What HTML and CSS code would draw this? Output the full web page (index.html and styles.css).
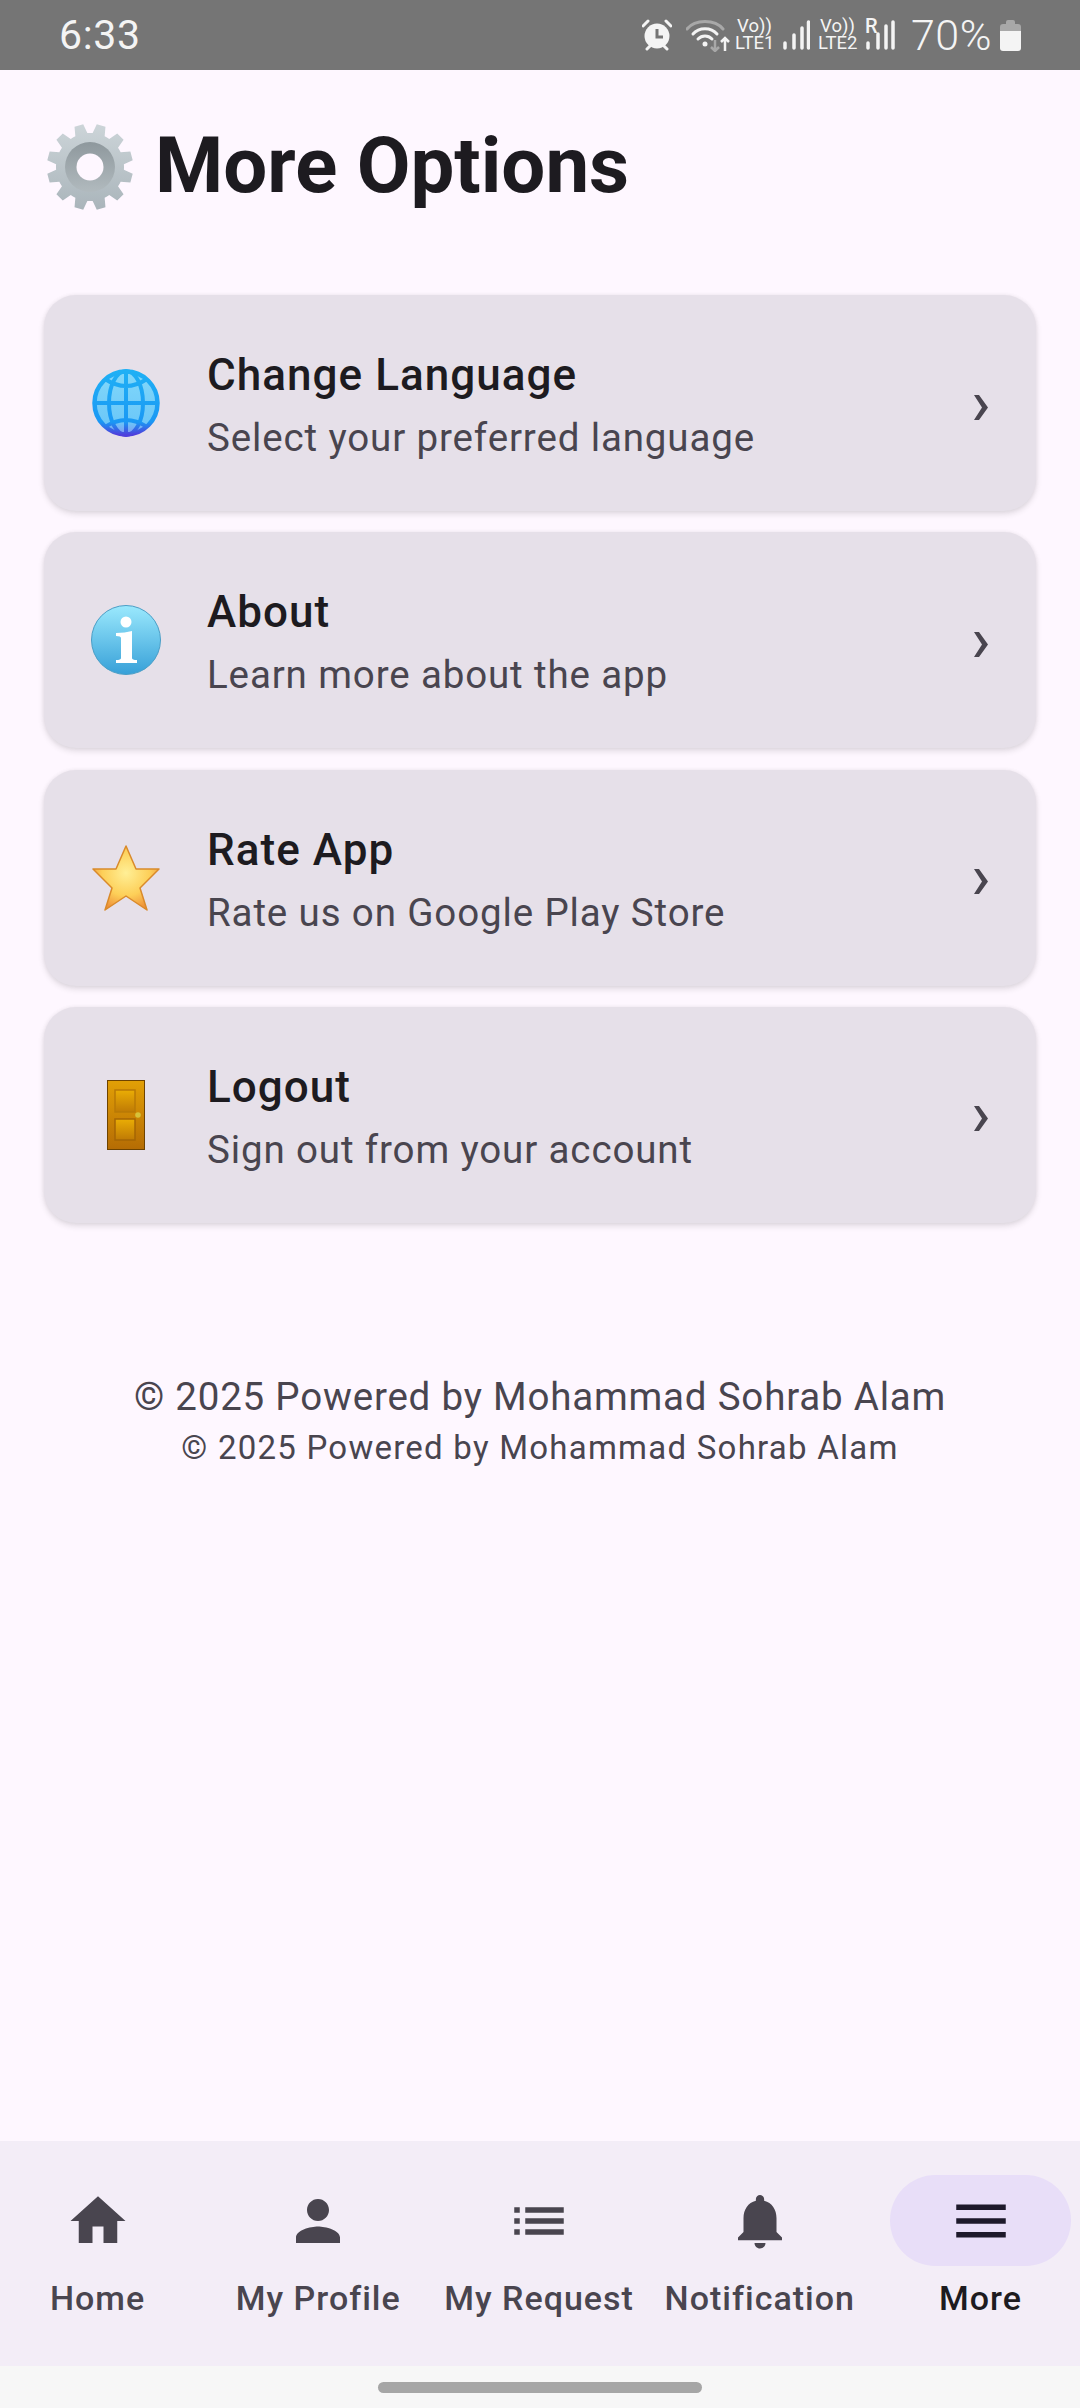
FILE: index.html
```html
<!DOCTYPE html>
<html lang="en">
<head>
    <meta charset="UTF-8">
    <meta name="viewport" content="width=device-width, initial-scale=1.0">
    <title>More Options</title>
    <link rel="stylesheet" href="styles.css">
</head>
<body>

    <!-- Status bar -->
    <div class="status-bar">
        <span class="clock">6:33</span>
        <div class="status-icons">
            <svg class="st-alarm" width="30" height="32" viewBox="0 0 30 32">
                <circle cx="15" cy="17" r="12.5" fill="#f4f4f4"/>
                <path d="M5 30l3-3M25 30l-3-3M1 7l5-5M29 7l-5-5" stroke="#f4f4f4" stroke-width="3" stroke-linecap="round"/>
                <path d="M15 10v8h6" fill="none" stroke="#757575" stroke-width="3"/>
            </svg>
            <svg class="st-wifi" width="44" height="34" viewBox="0 0 44 34">
                <path d="M1 11C9 1 29 1 37 11" fill="none" stroke="#a8a8a8" stroke-width="3" stroke-linecap="round"/>
                <path d="M7 16C13 9 25 9 31 16M12 21c4-4 10-4 14 0" fill="none" stroke="#f4f4f4" stroke-width="3" stroke-linecap="round"/>
                <circle cx="19" cy="26" r="2.5" fill="#f4f4f4"/>
                <path d="M29 22v11M25 29l4 4 4-4" fill="none" stroke="#a8a8a8" stroke-width="2.5"/>
                <path d="M39 33V20M35 24l4-4 4 4" fill="none" stroke="#f4f4f4" stroke-width="2.5"/>
            </svg>
            <div class="st-volte"><span>Vo))</span><span>LTE1</span></div>
            <svg class="st-signal" width="27" height="30" viewBox="0 0 27 30">
                <path d="M2 28v-5M11 28V15M19 28V8M25.500 28V2" stroke="#f4f4f4" stroke-width="3.500" stroke-linecap="round"/>
            </svg>
            <div class="st-volte"><span>Vo))</span><span>LTE2</span></div>
            <div class="st-roam">
                <span>R</span>
                <svg width="29" height="30" viewBox="0 0 29 30">
                    <path d="M2 28v-5M12 28V14M20 28V6M27 28V2" stroke="#f4f4f4" stroke-width="3.500" stroke-linecap="round"/>
                </svg>
            </div>
            <span class="st-battery-text">70%</span>
            <svg class="st-battery" width="21" height="31" viewBox="0 0 21 31">
                <path d="M6 4V2q0-2 2-2h5q2 0 2 2v2h3q3 0 3 3v4H0V7q0-3 3-3z" fill="#a8a8a8"/>
                <path d="M0 11h21v17q0 3-3 3H3q-3 0-3-3z" fill="#f4f4f4"/>
            </svg>
        </div>
    </div>

    <div class="content">
        <header class="page-head">
            <svg class="gear" width="88" height="88" viewBox="0 0 88 88">
                <defs>
                    <linearGradient id="gearFill" x1="0" y1="0" x2="0" y2="1">
                        <stop offset="0" stop-color="#cdd5d9"/>
                        <stop offset="1" stop-color="#a9b4ba"/>
                    </linearGradient>
                    <linearGradient id="gearRing" x1="0" y1="0" x2="0" y2="1">
                        <stop offset="0" stop-color="#8e989d"/>
                        <stop offset="1" stop-color="#b1babe"/>
                    </linearGradient>
                    <path id="tooth" d="M39.500 1h9l2.500 14H37z"/>
                    <clipPath id="gearShape">
                        <circle cx="44" cy="44" r="34"/>
                        <use href="#tooth" transform="rotate(15 44 44)"/>
                        <use href="#tooth" transform="rotate(45 44 44)"/>
                        <use href="#tooth" transform="rotate(75 44 44)"/>
                        <use href="#tooth" transform="rotate(105 44 44)"/>
                        <use href="#tooth" transform="rotate(135 44 44)"/>
                        <use href="#tooth" transform="rotate(165 44 44)"/>
                        <use href="#tooth" transform="rotate(195 44 44)"/>
                        <use href="#tooth" transform="rotate(225 44 44)"/>
                        <use href="#tooth" transform="rotate(255 44 44)"/>
                        <use href="#tooth" transform="rotate(285 44 44)"/>
                        <use href="#tooth" transform="rotate(315 44 44)"/>
                        <use href="#tooth" transform="rotate(345 44 44)"/>
                    </clipPath>
                </defs>
                <rect width="88" height="88" fill="url(#gearFill)" clip-path="url(#gearShape)"/>
                <circle cx="44" cy="44" r="25" fill="url(#gearRing)"/>
                <circle cx="44" cy="44" r="13.500" fill="#fef7ff"/>
            </svg>
            <h1>More Options</h1>
        </header>

        <div class="menu-list">
            <a class="menu-card" href="#">
                <span class="card-icon">
                    <svg width="68" height="68" viewBox="0 0 68 68">
                        <defs>
                            <linearGradient id="globeFill" x1="0" y1="0" x2="0" y2="1">
                                <stop offset="0" stop-color="#82d8fa"/>
                                <stop offset="0.8" stop-color="#6cc8f8"/>
                                <stop offset="1" stop-color="#7f95f2"/>
                            </linearGradient>
                            <linearGradient id="globeLine" x1="0" y1="0" x2="0" y2="1">
                                <stop offset="0" stop-color="#1fb0f5"/>
                                <stop offset="0.8" stop-color="#1a98f4"/>
                                <stop offset="1" stop-color="#4f3fdc"/>
                            </linearGradient>
                        </defs>
                        <circle cx="34" cy="34" r="31.500" fill="url(#globeFill)" stroke="url(#globeLine)" stroke-width="4.500"/>
                        <g fill="none" stroke="url(#globeLine)" stroke-width="4">
                            <ellipse cx="34" cy="34" rx="17" ry="32"/>
                            <path d="M34 2v64M2 34h64M13 10q21 14 42 0M13 58q21-14 42 0"/>
                        </g>
                    </svg>
                </span>
                <span class="card-text">
                    <span class="card-title">Change Language</span>
                    <span class="card-sub">Select your preferred language</span>
                </span>
                <svg class="chevron" width="14" height="25" viewBox="0 0 14 25"><path d="M0 0h5l9 12.500-9 12.500H0l8-12.500z" fill="#49454f"/></svg>
            </a>

            <a class="menu-card" href="#">
                <span class="card-icon">
                    <svg width="70" height="70" viewBox="0 0 70 70">
                        <defs>
                            <linearGradient id="infoFill" x1="0" y1="0" x2="0" y2="1">
                                <stop offset="0" stop-color="#9be9fd"/>
                                <stop offset="1" stop-color="#37a0d8"/>
                            </linearGradient>
                        </defs>
                        <circle cx="35" cy="35" r="34.500" fill="url(#infoFill)" stroke="#4a9ec6" stroke-width="1"/>
                        <circle cx="35" cy="17" r="5.500" fill="#fff"/>
                        <path d="M25 28q9 0 16-2v27q0 2 5 2v3H25v-3q5 0 5-2V33q0-2-5-2z" fill="#fff"/>
                    </svg>
                </span>
                <span class="card-text">
                    <span class="card-title">About</span>
                    <span class="card-sub">Learn more about the app</span>
                </span>
                <svg class="chevron" width="14" height="25" viewBox="0 0 14 25"><path d="M0 0h5l9 12.500-9 12.500H0l8-12.500z" fill="#49454f"/></svg>
            </a>

            <a class="menu-card" href="#">
                <span class="card-icon">
                    <svg width="68" height="66" viewBox="0 0 68 66">
                        <defs>
                            <radialGradient id="starFill" cx="0.5" cy="0.42" r="0.6">
                                <stop offset="0" stop-color="#ffef96"/>
                                <stop offset="0.6" stop-color="#fdcf58"/>
                                <stop offset="1" stop-color="#ee8f38"/>
                            </radialGradient>
                        </defs>
                        <path d="M34 1l10 23h23L48 43l7 22-21-14-21 14 7-22L1 24h23z" fill="url(#starFill)" stroke="#d98a2b" stroke-width="1.500" stroke-linejoin="round"/>
                    </svg>
                </span>
                <span class="card-text">
                    <span class="card-title">Rate App</span>
                    <span class="card-sub">Rate us on Google Play Store</span>
                </span>
                <svg class="chevron" width="14" height="25" viewBox="0 0 14 25"><path d="M0 0h5l9 12.500-9 12.500H0l8-12.500z" fill="#49454f"/></svg>
            </a>

            <a class="menu-card" href="#">
                <span class="card-icon">
                    <svg width="38" height="70" viewBox="0 0 38 70">
                        <defs>
                            <linearGradient id="doorFill" x1="0" y1="0" x2="0" y2="1">
                                <stop offset="0" stop-color="#e2a006"/>
                                <stop offset="1" stop-color="#b56c04"/>
                            </linearGradient>
                            <linearGradient id="panelFill" x1="0" y1="0" x2="0" y2="1">
                                <stop offset="0" stop-color="#eaad05"/>
                                <stop offset="1" stop-color="#bf7a05"/>
                            </linearGradient>
                        </defs>
                        <rect x="0.500" y="0.500" width="37" height="69" fill="url(#doorFill)" stroke="#6e4300"/>
                        <rect x="8" y="10" width="20" height="22" fill="url(#panelFill)" stroke="#b97a06" stroke-width="1.500"/>
                        <rect x="8" y="39" width="20" height="21" fill="url(#panelFill)" stroke="#a56605" stroke-width="1.500"/>
                        <circle cx="31" cy="35" r="2.800" fill="#d6c23a"/>
                    </svg>
                </span>
                <span class="card-text">
                    <span class="card-title">Logout</span>
                    <span class="card-sub">Sign out from your account</span>
                </span>
                <svg class="chevron" width="14" height="25" viewBox="0 0 14 25"><path d="M0 0h5l9 12.500-9 12.500H0l8-12.500z" fill="#49454f"/></svg>
            </a>
        </div>

        <footer class="credits">
            <p class="credit-main">© 2025 Powered by Mohammad Sohrab Alam</p>
            <p class="credit-small">© 2025 Powered by Mohammad Sohrab Alam</p>
        </footer>
    </div>

    <!-- Bottom navigation -->
    <nav class="bottom-nav">
        <a class="nav-item" href="#">
            <span class="nav-pill"><svg width="66" height="66" viewBox="0 0 24 24"><path d="M10 20v-6h4v6h5v-8h3L12 3 2 12h3v8z"/></svg></span>
            <span class="nav-label">Home</span>
        </a>
        <a class="nav-item" href="#">
            <span class="nav-pill"><svg width="66" height="66" viewBox="0 0 24 24"><path d="M12 12c2.210 0 4-1.790 4-4s-1.790-4-4-4-4 1.790-4 4 1.790 4 4 4zm0 2c-2.670 0-8 1.340-8 4v2h16v-2c0-2.660-5.330-4-8-4z"/></svg></span>
            <span class="nav-label">My Profile</span>
        </a>
        <a class="nav-item" href="#">
            <span class="nav-pill"><svg width="66" height="66" viewBox="0 0 24 24"><path d="M3 13h2v-2H3v2zm0 4h2v-2H3v2zm0-8h2V7H3v2zm4 4h14v-2H7v2zm0 4h14v-2H7v2zM7 7v2h14V7H7z"/></svg></span>
            <span class="nav-label">My Request</span>
        </a>
        <a class="nav-item" href="#">
            <span class="nav-pill"><svg width="66" height="66" viewBox="0 0 24 24"><path d="M12 22c1.100 0 2-.9 2-2h-4c0 1.100.9 2 2 2zm6-6v-5c0-3.070-1.630-5.640-4.500-6.320V4c0-.83-.67-1.500-1.500-1.500s-1.500.67-1.500 1.500v.68C7.640 5.360 6 7.920 6 11v5l-2 2v1h16v-1l-2-2z"/></svg></span>
            <span class="nav-label">Notification</span>
        </a>
        <a class="nav-item active" href="#">
            <span class="nav-pill"><svg width="66" height="66" viewBox="0 0 24 24"><path d="M3 18h18v-2H3v2zm0-5h18v-2H3v2zm0-7v2h18V6H3z"/></svg></span>
            <span class="nav-label">More</span>
        </a>
    </nav>

    <div class="gesture-bar"><span class="gesture-handle"></span></div>

</body>
</html>
```

FILE: styles.css
```css
* {
    box-sizing: border-box;
}

html, body {
    height: 100%;
}

body {
    margin: 0;
    display: flex;
    flex-direction: column;
    height: 2408px;
    background: #FEF7FF;
    color: #1D1B20;
    font-family: Roboto, sans-serif;
    overflow: hidden;
}

a {
    color: inherit;
    text-decoration: none;
}

/* Status bar */
.status-bar {
    height: 70px;
    flex: none;
    background: #757575;
    color: #f4f4f4;
    display: flex;
    align-items: center;
    justify-content: space-between;
    padding: 0 59px 0 59px;
}

.clock {
    font-size: 41px;
    letter-spacing: 0.7px;
}

.status-icons {
    display: flex;
    align-items: center;
}

.st-alarm {
    margin-right: 14px;
}

.st-wifi {
    margin-right: 5px;
}

.st-volte {
    display: flex;
    flex-direction: column;
    width: 39px;
    font-size: 18.500px;
    line-height: 17px;
    text-align: center;
    margin-right: 9px;
}

.st-signal {
    margin-right: 8px;
}

.st-roam {
    display: flex;
    align-items: flex-start;
    position: relative;
    margin-right: 16px;
}

.st-roam span {
    position: absolute;
    left: -1px;
    top: -6px;
    font-size: 20px;
    font-weight: 500;
}

.st-battery-text {
    font-size: 43px;
    font-weight: 350;
    letter-spacing: 0.5px;
    margin-right: 8px;
}

/* Page */
.content {
    flex: 1;
    padding: 0 44px;
}

.page-head {
    display: flex;
    align-items: center;
    gap: 21px;
    height: 125px;
    margin-top: 8px;
    margin-bottom: 92px;
    padding-top: 53px;
}

.gear {
    margin-left: 2px;
    flex: none;
}

.page-head h1 {
    margin: -2px 0 0;
    font-size: 78px;
    font-weight: 700;
    line-height: 1;
}

.menu-list {
    display: flex;
    flex-direction: column;
    gap: 21.3px;
}

.menu-card {
    height: 216px;
    display: flex;
    align-items: center;
    background: #E6E0E9;
    border-radius: 32px;
    padding-right: 48px;
    box-shadow: 0 3px 6px rgba(0, 0, 0, 0.12), 0 0 4px rgba(0, 0, 0, 0.05);
}

.card-icon {
    width: 163px;
    flex: none;
    display: flex;
    justify-content: center;
}

.card-text {
    flex: 1;
    display: flex;
    flex-direction: column;
}

.card-title {
    font-size: 44px;
    font-weight: 480;
    letter-spacing: 1.050px;
    line-height: 70px;
}

.card-sub {
    font-size: 38.500px;
    color: #49454F;
    letter-spacing: 0.870px;
    line-height: 56px;
}

.chevron {
    margin-top: 8px;
}

.credits {
    margin-top: 148px;
    text-align: center;
    color: #49454F;
}

.credits p {
    margin: 0;
}

.credit-main {
    font-size: 38.500px;
    letter-spacing: 0.800px;
    line-height: 52px;
}

.credit-small {
    font-size: 33px;
    letter-spacing: 1.240px;
    line-height: 50px;
}

/* Bottom navigation */
.bottom-nav {
    height: 225px;
    flex: none;
    background: #F3EDF7;
    display: flex;
    justify-content: space-between;
    padding: 34px 9px 0 7px;
}

.nav-item {
    width: 181px;
    display: flex;
    flex-direction: column;
    align-items: center;
    color: #49454F;
}

.nav-pill {
    width: 181px;
    height: 91px;
    flex: none;
    border-radius: 46px;
    display: flex;
    align-items: center;
    justify-content: center;
}

.nav-pill svg {
    fill: #49454F;
}

.nav-label {
    margin-top: 10px;
    font-size: 34px;
    font-weight: 480;
    letter-spacing: 1px;
    line-height: 44px;
    white-space: nowrap;
}

.nav-item.active {
    color: #1D1B20;
}

.nav-item.active .nav-pill {
    background: #E8DEF8;
}

.nav-item.active .nav-pill svg {
    fill: #1D192B;
}

.gesture-bar {
    height: 42px;
    flex: none;
    background: #F7F7F7;
    display: flex;
    justify-content: center;
    padding-top: 16px;
}

.gesture-handle {
    width: 324px;
    height: 11px;
    border-radius: 6px;
    background: #A6A6A6;
}
```
